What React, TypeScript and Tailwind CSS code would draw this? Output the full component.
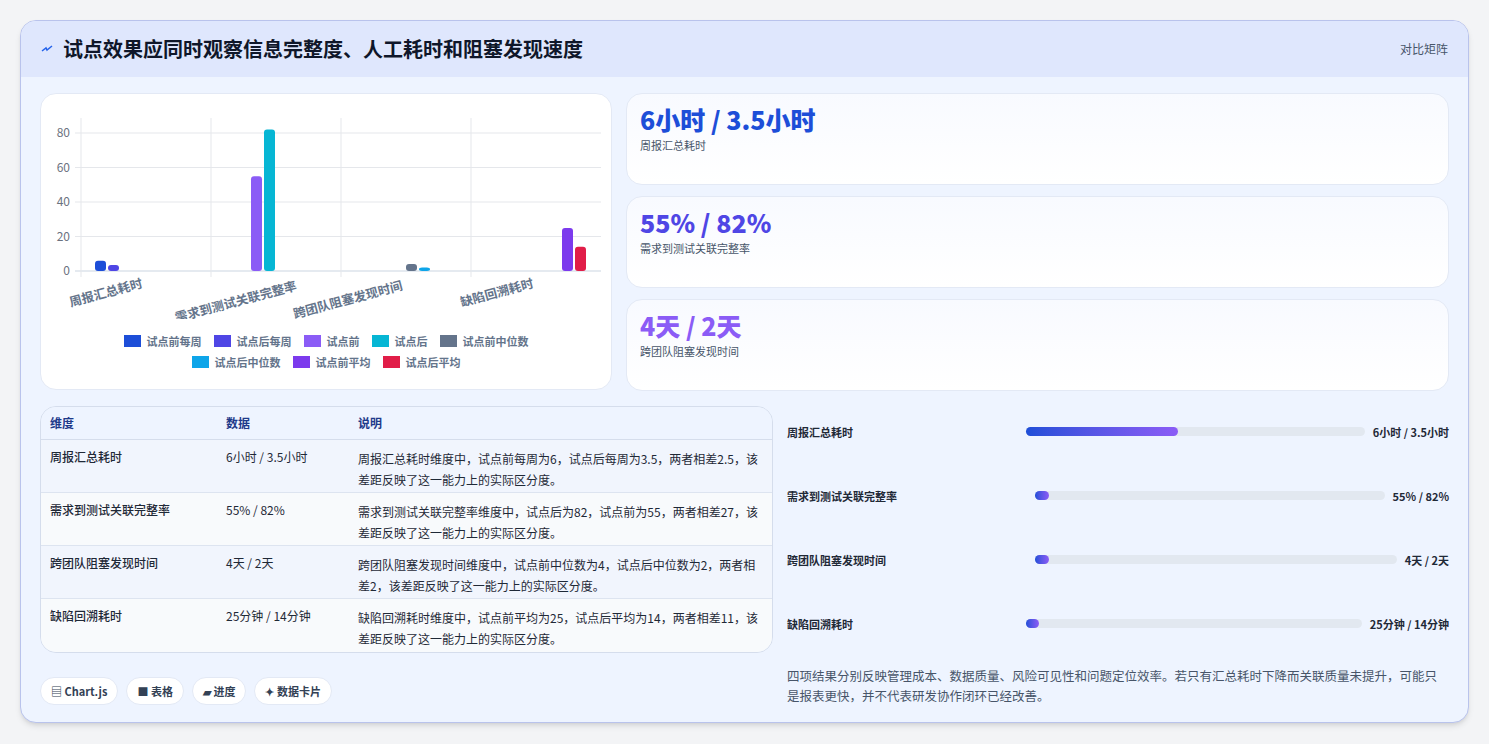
import React from 'react'

const font = { fontFamily: '"Noto Sans CJK SC", "Noto Sans", sans-serif' }

const legend = [
  ['试点前每周', '#1d4ed8'],
  ['试点后每周', '#4f46e5'],
  ['试点前', '#8b5cf6'],
  ['试点后', '#06b6d4'],
  ['试点前中位数', '#64748b'],
  ['试点后中位数', '#0ea5e9'],
  ['试点前平均', '#7c3aed'],
  ['试点后平均', '#e11d48'],
]

const bars: [number, number, string][] = [
  [54, 6, '#1d4ed8'],
  [67, 3.5, '#4f46e5'],
  [210, 55, '#8b5cf6'],
  [223, 82, '#06b6d4'],
  [365, 4, '#64748b'],
  [378, 2, '#0ea5e9'],
  [521, 25, '#7c3aed'],
  [534, 14, '#e11d48'],
]

function Chart() {
  const y0 = 177
  const k = 138 / 80
  return (
    <div className="rounded-2xl border border-[#e3e9f5] bg-white h-[297px] flex flex-col">
      <svg width="572" height="225" className="shrink-0">
        {[0, 20, 40, 60, 80].map((v) => (
          <g key={v}>
            <line x1="34" x2="560" y1={y0 - v * k} y2={y0 - v * k} stroke={v === 0 ? '#cbd5e1' : '#e5e7eb'} />
            <text x="29" y={y0 - v * k + 4} textAnchor="end" fontSize="12" fill="#6b7280" style={font}>{v}</text>
          </g>
        ))}
        {[40, 170, 300, 430].map((x) => (
          <line key={x} x1={x} x2={x} y1="24" y2={y0 + 6} stroke="#e5e7eb" />
        ))}
        {bars.map(([x, v, c], i) => (
          <rect key={i} x={x} y={y0 - v * k} width="11" height={v * k} rx="3" fill={c} />
        ))}
        {[
          ['周报汇总耗时', 66, 203],
          ['需求到测试关联完整率', 196, 212],
          ['跨团队阻塞发现时间', 308, 210],
          ['缺陷回溯耗时', 457, 203],
        ].map(([t, x, y]) => (
          <text key={t as string} x={x as number} y={y as number} textAnchor="middle" fontSize="12.5" fontWeight="600" fill="#64748b" transform={`rotate(-15 ${x} ${y})`} style={font}>{t}</text>
        ))}
      </svg>
      <div className="flex flex-wrap justify-center gap-x-3 gap-y-1 px-16 mt-[14px]">
        {legend.map(([t, c]) => (
          <div key={t} className="flex items-center gap-1.5 text-[11px] font-semibold text-[#64748b]">
            <span className="w-[17px] h-[12px]" style={{ background: c }} />
            {t}
          </div>
        ))}
      </div>
    </div>
  )
}

const stats = [
  ['6小时 / 3.5小时', '周报汇总耗时', 'text-[#1d4ed8]'],
  ['55% / 82%', '需求到测试关联完整率', 'text-[#4f46e5]'],
  ['4天 / 2天', '跨团队阻塞发现时间', 'text-[#8b5cf6]'],
]

const rows = [
  ['周报汇总耗时', '6小时 / 3.5小时', '周报汇总耗时维度中，试点前每周为6，试点后每周为3.5，两者相差2.5，该差距反映了这一能力上的实际区分度。'],
  ['需求到测试关联完整率', '55% / 82%', '需求到测试关联完整率维度中，试点后为82，试点前为55，两者相差27，该差距反映了这一能力上的实际区分度。'],
  ['跨团队阻塞发现时间', '4天 / 2天', '跨团队阻塞发现时间维度中，试点前中位数为4，试点后中位数为2，两者相差2，该差距反映了这一能力上的实际区分度。'],
  ['缺陷回溯耗时', '25分钟 / 14分钟', '缺陷回溯耗时维度中，试点前平均为25，试点后平均为14，两者相差11，该差距反映了这一能力上的实际区分度。'],
]

const progress: [string, string, number, string][] = [
  ['周报汇总耗时', '6小时 / 3.5小时', 45, 'w-[239px]'],
  ['需求到测试关联完整率', '55% / 82%', 4, 'w-[248px]'],
  ['跨团队阻塞发现时间', '4天 / 2天', 4, 'w-[248px]'],
  ['缺陷回溯耗时', '25分钟 / 14分钟', 3, 'w-[239px]'],
]

export default function App() {
  return (
    <div className="min-h-screen bg-[#f3f4f6] p-5" style={font}>
      <div className="rounded-2xl border border-[#b9c3ec] bg-[#eef4ff] overflow-hidden shadow-md h-[703px]">
        <div className="h-[56px] bg-[#dfe7fd] flex items-center justify-between px-5">
          <div className="flex items-center gap-2.5">
            <svg width="12" height="12" viewBox="0 0 12 12">
              <path d="M1 8 L5 5 L6 7 L11 3" stroke="#2563eb" strokeWidth="1.5" fill="none" />
            </svg>
            <span className="text-[20px] font-bold text-[#0f172a]">试点效果应同时观察信息完整度、人工耗时和阻塞发现速度</span>
          </div>
          <span className="text-[12px] text-[#475569]">对比矩阵</span>
        </div>
        <div className="px-[19px] pt-[16px] grid grid-cols-[572px_1fr] gap-x-[14px]">
          <Chart />
          <div className="flex flex-col gap-[11px]">
            {stats.map(([v, l, c]) => (
              <div key={l} className="h-[92px] rounded-2xl border border-[#e3e9f5] bg-gradient-to-b from-[#f8faff] to-white px-[13px] pt-[8px]">
                <div className={`text-[25px] font-extrabold leading-[34px] ${c}`}>{v}</div>
                <div className="text-[11px] text-[#475569] mt-[1px]">{l}</div>
              </div>
            ))}
          </div>
        </div>
        <div className="px-[19px] pt-[15px] grid grid-cols-[733px_1fr] gap-x-[14px]">
          <div>
            <div className="rounded-2xl border border-[#d5ddec] overflow-hidden text-[12px] text-[#1f2937]">
              <div className="grid grid-cols-[176px_132px_1fr] h-[33px] items-center px-[9px] bg-[#eef4ff] border-b border-[#d5ddec] text-[#1e3a8a] font-semibold">
                <span>维度</span><span>数据</span><span>说明</span>
              </div>
              {rows.map(([a, b, c], i) => (
                <div key={a} className={`grid grid-cols-[176px_132px_1fr] h-[53px] pt-[8px] px-[9px] ${i % 2 ? 'bg-[#f8fafc]' : 'bg-[#f1f5fd]'} ${i < 3 ? 'border-b border-[#dde4f0]' : ''}`}>
                  <span className="font-medium">{a}</span>
                  <span>{b}</span>
                  <span className="leading-[21px] pr-1">{c}</span>
                </div>
              ))}
            </div>
            <div className="flex gap-2 mt-[24px]">
              {['▤ Chart.js', '■ 表格', '▰ 进度', '✦ 数据卡片'].map((t) => (
                <span key={t} className="rounded-full border border-[#e3e9f5] bg-white px-2.5 h-[28px] flex items-center text-[11px] font-bold text-[#334155]">{t}</span>
              ))}
            </div>
          </div>
          <div className="pt-[14px]">
            {progress.map(([l, v, p, w]) => (
              <div key={l} className="h-[64px] flex items-start pt-[4px] text-[11px] font-semibold text-[#1f2937]">
                <span className={`${w} shrink-0`}>{l}</span>
                <div className="flex-1 h-[9px] rounded-full bg-[#e2e8f0] mt-[3px] mr-2">
                  <div className="h-full rounded-full bg-gradient-to-r from-[#1d4ed8] to-[#8b5cf6] min-w-[13px]" style={{ width: `${p}%` }} />
                </div>
                <span className="whitespace-nowrap font-bold">{v}</span>
              </div>
            ))}
            <p className="text-[12.5px] leading-[20px] text-[#475569] mt-[-10px] pr-1">四项结果分别反映管理成本、数据质量、风险可见性和问题定位效率。若只有汇总耗时下降而关联质量未提升，可能只是报表更快，并不代表研发协作闭环已经改善。</p>
          </div>
        </div>
      </div>
    </div>
  )
}
